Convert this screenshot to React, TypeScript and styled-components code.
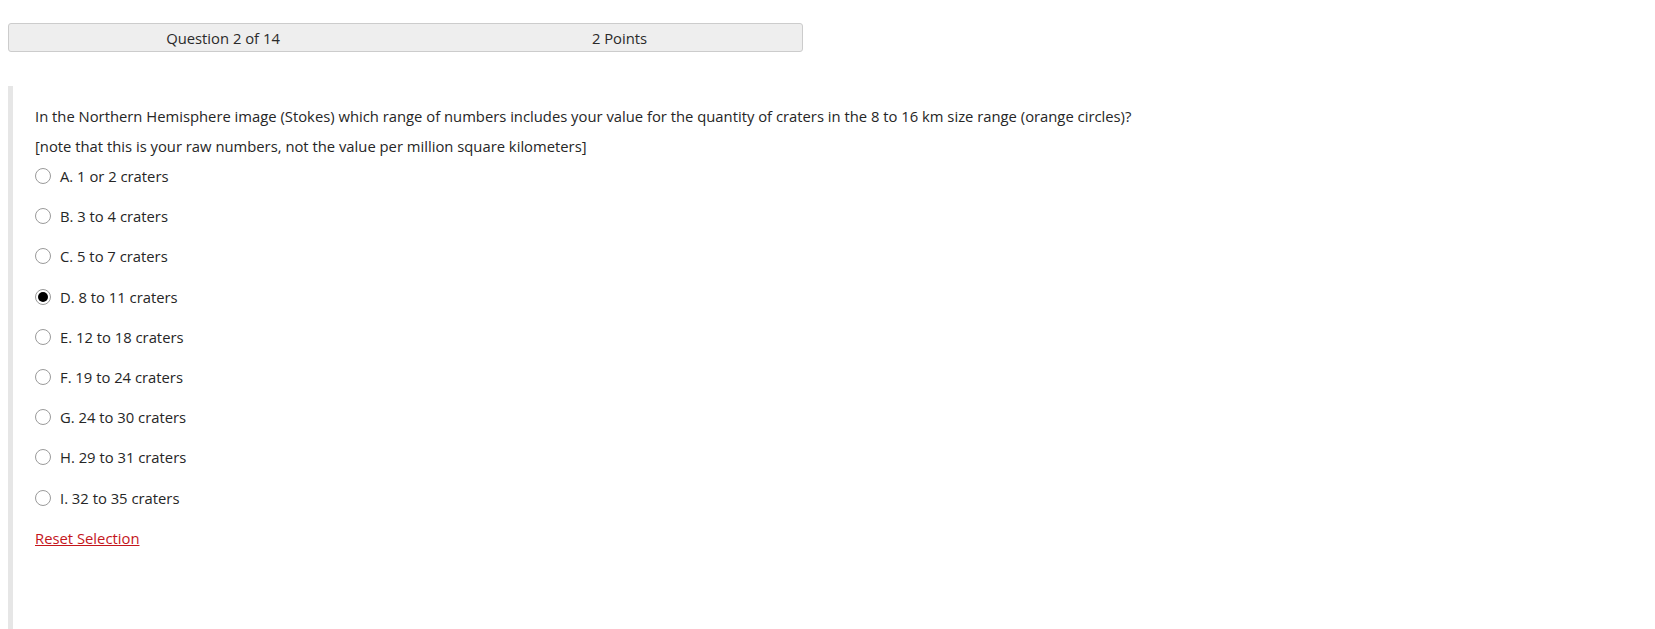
import styled, { createGlobalStyle } from "styled-components";

const GlobalStyle = createGlobalStyle`
  html, body {
    margin: 0;
    padding: 0;
    background: #fff;
  }
  body {
    font-family: "Open Sans", "Liberation Sans", sans-serif;
    color: #333;
  }
`;

const Page = styled.div`
  padding: 23px 8px 0;
  box-sizing: border-box;
  width: 1655px;
  height: 629px;
  overflow: hidden;
`;

const Header = styled.div`
  width: 795px;
  height: 29px;
  box-sizing: border-box;
  display: grid;
  grid-template-columns: 428px 1fr;
  align-items: center;
  background: #eeeeee;
  border: 1px solid #cccccc;
  border-radius: 3px;
  font-size: 14.8px;
  color: #2a2a2a;
`;

const HeaderCell = styled.div`
  text-align: center;
  line-height: 20px;
`;

const QuestionBody = styled.section`
  margin-top: 34px;
  border-left: 5px solid #e6e6e6;
  padding: 20px 0 0 22px;
  min-height: 560px;
  box-sizing: border-box;
`;

const Paragraph = styled.p<{ $gap?: number }>`
  margin: 0 0 ${(p) => p.$gap ?? 10}px;
  font-size: 14.8px;
  line-height: 20px;
  color: #262626;
`;

const OptionList = styled.div`
  display: flex;
  flex-direction: column;
  gap: 20.2px;
  margin-top: 7px;
`;

const OptionRow = styled.label`
  display: flex;
  align-items: center;
  gap: 9px;
  height: 20px;
  font-size: 14.8px;
  color: #262626;
  cursor: pointer;
`;

const Radio = styled.span<{ $checked?: boolean }>`
  width: 16px;
  height: 16px;
  box-sizing: border-box;
  border-radius: 50%;
  border: 1px solid #9a9a9a;
  background: #fff;
  display: inline-flex;
  align-items: center;
  justify-content: center;
  flex-shrink: 0;

  &::after {
    content: "";
    display: ${(p) => (p.$checked ? "block" : "none")};
    width: 10px;
    height: 10px;
    border-radius: 50%;
    background: #000;
  }
`;

const ResetLink = styled.a`
  display: inline-block;
  margin-top: 20px;
  font-size: 14.8px;
  line-height: 20px;
  color: #c4161c;
  text-decoration: underline;
  cursor: pointer;
`;

const options = [
  "A. 1 or 2 craters",
  "B. 3 to 4 craters",
  "C. 5 to 7 craters",
  "D. 8 to 11 craters",
  "E. 12 to 18 craters",
  "F. 19 to 24 craters",
  "G. 24 to 30 craters",
  "H. 29 to 31 craters",
  "I. 32 to 35 craters",
];

export default function App() {
  const selected = 3;
  return (
    <>
      <GlobalStyle />
      <Page>
        <Header>
          <HeaderCell>Question 2 of 14</HeaderCell>
          <HeaderCell>2 Points</HeaderCell>
        </Header>
        <QuestionBody>
          <Paragraph>
            In the Northern Hemisphere image (Stokes) which range of numbers includes your value for the
            quantity of craters in the 8 to 16 km size range (orange circles)?
          </Paragraph>
          <Paragraph $gap={10}>
            [note that this is your raw numbers, not the value per million square kilometers]
          </Paragraph>
          <OptionList>
            {options.map((o, i) => (
              <OptionRow key={o}>
                <Radio $checked={i === selected} />
                {o}
              </OptionRow>
            ))}
          </OptionList>
          <ResetLink>Reset Selection</ResetLink>
        </QuestionBody>
      </Page>
    </>
  );
}
